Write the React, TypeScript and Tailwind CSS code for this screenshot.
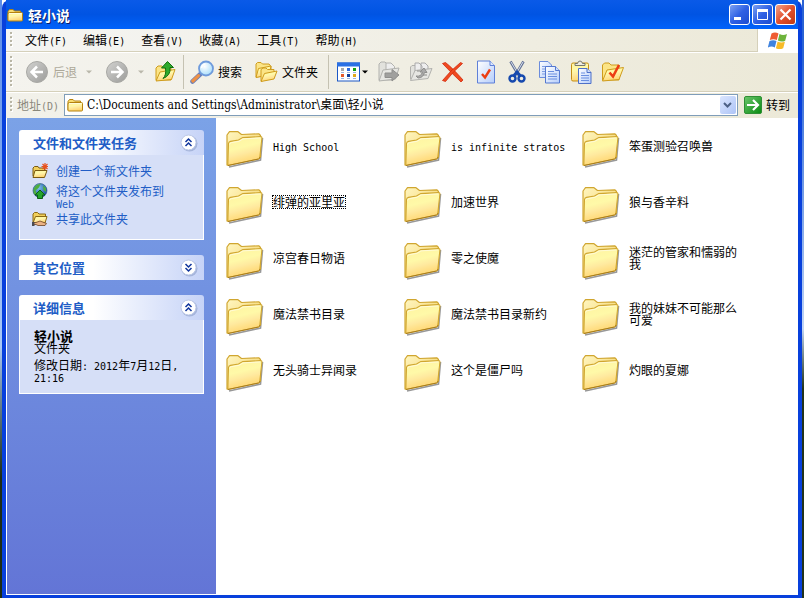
import { Fragment, type ReactNode } from "react";
import clsx from "clsx";

const menus = ["文件(F)", "编辑(E)", "查看(V)", "收藏(A)", "工具(T)", "帮助(H)"];

const folders = [
  "High School",
  "is infinite stratos",
  "笨蛋测验召唤兽",
  "绯弹的亚里亚",
  "加速世界",
  "狼与香辛料",
  "凉宫春日物语",
  "零之使魔",
  "迷茫的管家和懦弱的我",
  "魔法禁书目录",
  "魔法禁书目录新约",
  "我的妹妹不可能那么可爱",
  "无头骑士异闻录",
  "这个是僵尸吗",
  "灼眼的夏娜",
];

const focused = "绯弹的亚里亚";

/* Latin runs are set in a half-width mono face, as in the system font */
function Mixed({ text }: { text: string }) {
  return (
    <>
      {text.split(/([\x20-\x7e]+)/).map((part, idx) =>
        idx % 2 ? (
          <span key={idx} className="font-['DejaVu_Sans_Mono',monospace] text-[10px] leading-[0]">
            {part}
          </span>
        ) : (
          <Fragment key={idx}>{part}</Fragment>
        )
      )}
    </>
  );
}

function Svg({ size = 24, children }: { size?: number; children: ReactNode }) {
  return (
    <svg width={size} height={size} viewBox={`0 0 ${size} ${size}`} className="shrink-0" aria-hidden="true">
      {children}
    </svg>
  );
}

function Defs() {
  return (
    <svg width="0" height="0" className="absolute" aria-hidden="true">
      <defs>
        <linearGradient id="front" x1="0" y1="0" x2="0.3" y2="1">
          <stop offset="0" stopColor="#fff3a0" />
          <stop offset="0.45" stopColor="#fff9a8" />
          <stop offset="0.65" stopColor="#ffeaa0" />
          <stop offset="1" stopColor="#ffd670" />
        </linearGradient>
        <linearGradient id="back" x1="0" y1="0" x2="1" y2="1">
          <stop offset="0" stopColor="#fff6c0" />
          <stop offset="1" stopColor="#f2cd5e" />
        </linearGradient>
        <linearGradient id="gray" x1="0" y1="0" x2="1" y2="1">
          <stop offset="0" stopColor="#d2d2d0" />
          <stop offset="1" stopColor="#9c9c9a" />
        </linearGradient>
        <linearGradient id="paper" x1="0" y1="0" x2="1" y2="1">
          <stop offset="0" stopColor="#ffffff" />
          <stop offset="1" stopColor="#b5cdfb" />
        </linearGradient>
        <linearGradient id="green" x1="0" y1="0" x2="1" y2="1">
          <stop offset="0" stopColor="#6cc66c" />
          <stop offset="1" stopColor="#078a10" />
        </linearGradient>
        <radialGradient id="lens" cx="0.4" cy="0.35" r="0.7">
          <stop offset="0" stopColor="#ffffff" />
          <stop offset="1" stopColor="#a4dcfb" />
        </radialGradient>
        <radialGradient id="globe" cx="0.4" cy="0.3" r="0.8">
          <stop offset="0" stopColor="#7fc3ee" />
          <stop offset="1" stopColor="#0c3a8c" />
        </radialGradient>
        <filter id="soft" x="-20%" y="-20%" width="140%" height="140%">
          <feGaussianBlur stdDeviation="0.7" />
        </filter>
      </defs>
    </svg>
  );
}

function FolderIcon() {
  return (
    <Svg size={40}>
      <path d="M4 38 35.500 31 37.500 9" fill="none" stroke="#555" strokeWidth="1.600" opacity="0.600" filter="url(#soft)" />
      <path
        d="M2 36V6L4.500 2.700H13L16.500 5.500 34 4.800 35.500 6.500V28Z"
        fill="url(#back)"
        stroke="#d0a630"
        strokeWidth="1.200"
        strokeLinejoin="round"
      />
      <path
        d="M2.800 36.500 3.500 14.500Q3.600 12.800 5.500 12.400L13.500 11 17.500 8.600 35.500 7.600Q37 7.600 36.900 9L34.800 28.500Q34.600 29.700 33.500 30Z"
        fill="url(#front)"
        stroke="#d0a630"
        strokeWidth="1.100"
        strokeLinejoin="round"
      />
      <path d="M4.600 15.500Q4.700 14 6.200 13.700L14 12.300 18 9.900 35.300 8.900" fill="none" stroke="#fffbd8" strokeWidth="1" />
      <path d="M3 36.500 33.500 30Q34.800 29.600 35 28" fill="none" stroke="#a87c1c" strokeWidth="1" />
    </Svg>
  );
}

function SmallFolder() {
  return (
    <Svg size={16}>
      <path d="M1 13V4.500L2.500 2.500H6L7.500 4H13.500V6" fill="#f8dc70" stroke="#b5820f" strokeLinejoin="round" />
      <path d="M1 13.500V7Q1 5.500 2.500 5.500H14.500Q15.500 5.500 15.500 6.500V13Q15.500 14 14.500 14H2Q1 14 1 13.500Z" fill="url(#front)" stroke="#b5820f" />
      <path d="M2 6.500H14.500" stroke="#fffbd8" />
    </Svg>
  );
}

function RoundArrow({ back }: { back?: boolean }) {
  return (
    <Svg>
      <circle cx="12" cy="12" r="10.500" fill="url(#gray)" stroke="#a8a8a4" />
      <path
        d={back ? "M18 12H7.500M12 6.500 6.500 12 12 17.500" : "M6 12H16.500M12 6.500 17.500 12 12 17.500"}
        fill="none"
        stroke="#fff"
        strokeWidth="2.500"
      />
    </Svg>
  );
}

function UpIcon() {
  return (
    <Svg>
      <path d="M3 20V8L5 6H9L11 8H18V20Z" fill="#fbe486" stroke="#cf9c1c" strokeLinejoin="round" />
      <path d="M3 21 7 12 22 9.500 18.500 19.500Z" fill="url(#front)" stroke="#cf9c1c" strokeLinejoin="round" />
      <path d="M10 18.500Q13.500 15 12.500 8H8.500L14.500 1.500 20.500 7.500H17Q18 15.500 10 18.500Z" fill="#2faa2c" stroke="#11700f" strokeLinejoin="round" />
    </Svg>
  );
}

function SearchIcon() {
  return (
    <Svg>
      <path d="M2.500 21.500 10.500 14" stroke="#6b7fb8" strokeWidth="4.500" strokeLinecap="round" />
      <path d="M2.800 21 8.500 15.700" stroke="#ee9145" strokeWidth="3.200" strokeLinecap="round" />
      <circle cx="16" cy="8.500" r="7" fill="url(#lens)" stroke="#6f9bdc" strokeWidth="1.800" />
      <path d="M11.500 8Q12 4.500 15.500 4" fill="none" stroke="#fff" strokeWidth="1.500" />
    </Svg>
  );
}

function FoldersIcon() {
  return (
    <Svg>
      <path d="M2 17V4L3.500 2.500H7L8.500 4H15L17 6.500V15Z" fill="#fbe486" stroke="#cf9c1c" strokeLinejoin="round" />
      <path d="M2 17.500 4.500 8.500 17 6 15 15Z" fill="url(#front)" stroke="#cf9c1c" strokeLinejoin="round" />
      <path d="M7 21V9.500L9 8H12L13.500 9.500H20V18Z" fill="#fbe486" stroke="#cf9c1c" strokeLinejoin="round" />
      <path d="M7 21.500 10.500 13.500 23 11 20 19Z" fill="url(#front)" stroke="#cf9c1c" strokeLinejoin="round" />
    </Svg>
  );
}

function ViewsIcon() {
  const colors = ["#a8a8a8", "#2c6be0", "#12a012", "#e45a2a", "#12409c", "#e0a818"];
  return (
    <Svg>
      <rect x="0.500" y="3" width="22" height="18" fill="#fff" stroke="#1b57c6" />
      <rect x="0" y="2.500" width="23" height="4" fill="#2a70e4" />
      {colors.map((fill, idx) => (
        <g key={idx}>
          <rect x={4 + (idx % 3) * 6} y={idx < 3 ? 8 : 14} width="3" height="3" fill={fill} />
          <path d={`M${4 + (idx % 3) * 6} ${idx < 3 ? 12.5 : 18.5}h3`} stroke="#9db4dc" />
        </g>
      ))}
    </Svg>
  );
}

function GrayFolder({ arrow }: { arrow?: boolean }) {
  return (
    <Svg>
      {arrow ? (
        <>
          <path d="M2 20V4L4 2H8L10 4H15V20Z" fill="#e2e2dd" stroke="#b2b2ae" />
          <path d="M9 3H14L17.500 6.500V15H9Z" fill="#eee" stroke="#b2b2ae" />
          <path d="M2 21 6 10 22 8 18.500 19Z" fill="#e6e6e2" stroke="#b2b2ae" strokeLinejoin="round" />
          <path d="M8 13H15V9.500L22 15 15 21V17.500H8Z" fill="#a0a09e" stroke="#8e8e8c" strokeLinejoin="round" />
        </>
      ) : (
        <>
          <path d="M1.500 19V7L3 5.500H7V19Z" fill="#e2e2dd" stroke="#b2b2ae" />
          <path d="M6 3H10L13 6V14H6ZM12 3H16L19 6V14H12Z" fill="#eee" stroke="#aaa" />
          <path d="M1.500 20.500 6 10.500 23 8.500 19 18.500Z" fill="#e6e6e2" stroke="#b2b2ae" strokeLinejoin="round" />
          <path d="M7 16Q12 17 13.500 12H11L15 8 18 12.500H15.500Q14 18 9 18ZM8 11H12M14 15H18" fill="#aaa" stroke="#8e8e8c" />
        </>
      )}
    </Svg>
  );
}

function DeleteIcon() {
  return (
    <Svg>
      <path d="M1.500 3.500 4.500 2.500Q11.500 8 22 20L20 22Q10.500 13 1.500 3.500Z" fill="#f04a20" stroke="#d2280c" strokeWidth="0.800" />
      <path d="M19.500 2.500 21.500 3.500Q12.500 11 4.500 21.500L1.500 20.500Q9.500 10.500 19.500 2.500Z" fill="#f04a20" stroke="#d2280c" strokeWidth="0.800" />
    </Svg>
  );
}

function CheckDoc() {
  return (
    <Svg>
      <path d="M4.500 1H17L21.500 5.500V23H4.500Z" fill="url(#paper)" stroke="#5f80d8" />
      <path d="M17 1V5.500H21.500" fill="#dbe7fd" stroke="#5f80d8" />
      <path d="M9 14 12 17.500 17 9.500" fill="none" stroke="#ec3e14" strokeWidth="2.400" />
    </Svg>
  );
}

function CutIcon() {
  return (
    <Svg>
      <path d="M5.500 1.500 13.500 15M18.500 1.500 10.500 15" stroke="#5f6f94" strokeWidth="2.600" />
      <path d="M6 2 12.500 13M18 2 11.500 13" stroke="#d9dfec" strokeWidth="1" />
      <circle cx="7.500" cy="18.500" r="3" fill="none" stroke="#1649ae" strokeWidth="2.400" />
      <circle cx="16.500" cy="18.500" r="3" fill="none" stroke="#1649ae" strokeWidth="2.400" />
      <path d="M9 15.500 12 12 15 15.500" fill="none" stroke="#1649ae" strokeWidth="3" />
    </Svg>
  );
}

function CopyIcon() {
  return (
    <Svg>
      <path d="M2.500 1.500H11L14.500 5V17.500H2.500Z" fill="url(#paper)" stroke="#6b8cdc" />
      <path d="M5 6.500H10M5 9H12M5 11.500H12M5 14H12" stroke="#7e9ee2" />
      <path d="M8.500 6.500H18.500L22.500 10.500V23H8.500Z" fill="url(#paper)" stroke="#5579d0" />
      <path d="M18.500 6.500V10.500H22.500" fill="#cfdffc" stroke="#5579d0" />
      <path d="M11 11.500H17M11 14H20M11 16.500H20M11 19H20" stroke="#6a8fe0" />
    </Svg>
  );
}

function PasteIcon() {
  return (
    <Svg>
      <rect x="2.500" y="3" width="17" height="18" rx="1.500" fill="url(#front)" stroke="#c48e16" />
      <path d="M6 5.500V3.500H8.500Q9 1 11 1T13.500 3.500H16V5.500Z" fill="#eceae0" stroke="#77776c" />
      <path d="M9.500 8.500H18L22 12.500V23.500H9.500Z" fill="url(#paper)" stroke="#4e70c8" />
      <path d="M18 8.500V12.500H22" fill="#cfdffc" stroke="#4e70c8" />
      <path d="M12 13H16M12 15.500H20M12 18H20M12 20.500H20" stroke="#6a8fe0" />
    </Svg>
  );
}

function FolderCheck() {
  return (
    <Svg>
      <path d="M1.500 20V5L3.500 3H8L10 5H18V20Z" fill="#fbe486" stroke="#cf9c1c" strokeLinejoin="round" />
      <path d="M1.500 21 6 10 22.500 7.500 18 19.500Z" fill="url(#front)" stroke="#cf9c1c" strokeLinejoin="round" />
      <path d="M8.500 12.500 12 16.500 18 5" fill="none" stroke="#ec3e14" strokeWidth="2.600" />
    </Svg>
  );
}

function WindowsLogo() {
  return (
    <Svg size={20}>
      <path d="M3.500 2.500Q7 .5 10.500 2.500L8.800 9Q5.500 7.300 1.800 9Z" fill="#ef5b32" />
      <path d="M11.500 3Q15 5 19 3L17.200 9.700Q13.500 11.500 9.900 9.500Z" fill="#6db33b" />
      <path d="M1.500 10Q5.200 8.300 8.500 10L6.800 16.500Q3.500 14.700-.2 16.500Z" fill="#3f83df" />
      <path d="M9.600 10.600Q13.200 12.400 16.900 10.700L15.200 17.200Q11.500 19 7.900 17.200Z" fill="#f8bb27" />
    </Svg>
  );
}

function NewFolderIcon() {
  return (
    <Svg size={16}>
      <path d="M1 13V5L2.500 3.500H6L7 5H12.500V13Z" fill="#f1cf5a" stroke="#7a5a12" />
      <path d="M1 14.500 3 7.500H15L12.500 14.500Z" fill="url(#front)" stroke="#7a5a12" strokeLinejoin="round" />
      <path d="M13 0V7M9.500 3.500H16M10.500 1 15.500 6M15.500 1 10.500 6" stroke="#e8501c" strokeWidth="1.200" />
    </Svg>
  );
}

function PublishIcon() {
  return (
    <Svg size={16}>
      <circle cx="8" cy="7.500" r="7" fill="url(#globe)" stroke="#23527c" strokeWidth="0.600" />
      <path d="M3 3.500Q5 .8 8.500 1L7 4.500 3.500 7.500 5 11 2.500 11.500Q.2 7.500 3 3.500ZM11 2.500 14 5V9L11.500 7Z" fill="#4fae3e" />
      <path d="M8 7 13 12H10.500V15.500H5.500V12H3Z" fill="#25a42b" stroke="#0c5f14" strokeLinejoin="round" />
    </Svg>
  );
}

function ShareIcon() {
  return (
    <Svg size={16}>
      <path d="M1 11V3L2.500 1.500H5.500L7 3H13.500V5" fill="#f1cf5a" stroke="#8a6812" />
      <path d="M1 12 3.500 5.500H15L13 12Z" fill="url(#front)" stroke="#8a6812" strokeLinejoin="round" />
      <path d="M0 11.500H4L8 10 14.500 12.500 13 14.500H6L4 13.500H0Z" fill="#eab183" stroke="#6b4322" strokeWidth="0.800" />
      <path d="M0 11V15H2.500V11Z" fill="#4a4a52" />
    </Svg>
  );
}

function Caret({ dim }: { dim?: boolean }) {
  return (
    <svg width="8" height="4" viewBox="0 0 8 4" className={clsx("shrink-0", dim ? "text-[#b9b7aa]" : "text-black")} aria-hidden="true">
      <path d="M1 0.500H7L4 3.500Z" fill="currentColor" />
    </svg>
  );
}

function Grip() {
  return (
    <svg width="3" height="100%" className="shrink-0 self-stretch" aria-hidden="true">
      <defs>
        <pattern id="dots" width="3" height="4" patternUnits="userSpaceOnUse">
          <rect x="1" y="1" width="2" height="2" fill="#fff" />
          <rect width="2" height="2" fill="#b9b6a6" />
        </pattern>
      </defs>
      <rect width="3" height="100%" fill="url(#dots)" />
    </svg>
  );
}

function Separator() {
  return <span className="h-[34px] w-px shrink-0 bg-[#c5c2b2]" />;
}

function TitleButton({ label, close, children }: { label: string; close?: boolean; children: ReactNode }) {
  return (
    <button
      type="button"
      aria-label={label}
      className={clsx(
        "size-[21px] rounded-[3px] border border-white",
        close
          ? "bg-linear-to-br from-[#f0a188] via-[#e2502d] to-[#c03a12]"
          : "bg-linear-to-br from-[#7c9ff2] via-[#2f60e4] to-[#1c4cd0]"
      )}
    >
      <svg width="19" height="19" viewBox="0 0 19 19" aria-hidden="true">
        {children}
      </svg>
    </button>
  );
}

function Panel({ title, children }: { title: string; children?: ReactNode }) {
  return (
    <section>
      <h2 className="rounded-t-[3px] bg-linear-to-r from-white from-40% to-[#c6d3f7]">
        <button
          type="button"
          className="flex h-[25px] w-full items-center justify-between pr-1.5 pl-3.5 text-[13px] font-bold text-[#215dc6]"
        >
          {title}
          <svg width="18" height="18" viewBox="0 0 18 18" aria-hidden="true">
            <circle cx="9.500" cy="9.500" r="8" fill="#8a9cc8" opacity="0.600" />
            <circle cx="8.500" cy="8.500" r="7.500" fill="#fff" stroke="#bcc8e6" />
            <path
              d={children ? "M5.500 8 8.500 5 11.500 8M5.500 12 8.500 9 11.500 12" : "M5.500 5 8.500 8 11.500 5M5.500 9 8.500 12 11.500 9"}
              fill="none"
              stroke="#10359c"
              strokeWidth="1.500"
            />
          </svg>
        </button>
      </h2>
      {children && <div className="border border-t-0 border-white bg-[#d6dff7] px-3">{children}</div>}
    </section>
  );
}

function Task({ icon, text }: { icon: ReactNode; text: string }) {
  return (
    <li className="first:mb-1">
      <a href="#" className="flex items-start gap-2 pr-6 text-[#215dc6]">
        {icon}
        <span className="py-0.5">
          <Mixed text={text} />
        </span>
      </a>
    </li>
  );
}

export default function App() {
  return (
    <div className="flex h-screen bg-white font-['Noto_Sans_CJK_SC',sans-serif] text-xs leading-3 text-black">
      <Defs />

      {/* Desktop edge */}
      <div className="w-0.5 bg-linear-to-b from-[#5b8be8] from-0% via-[#a9c8f6] via-58% to-[#1d2c14] to-80%" />

      <div className="flex min-w-0 flex-1 flex-col rounded-t-lg border-x-4 border-b-[3px] border-[#0840dc] bg-[#0840dc]">
        {/* Title bar */}
        <header className="flex h-[29px] shrink-0 items-center gap-[5px] bg-linear-to-b from-[#0a5ae8] via-[#0054e3] via-50% to-[#0062fb] pr-0.5 pl-px">
          <SmallFolder />
          <h1 className="flex-1 text-sm font-bold text-white [text-shadow:1px_1px_#0a1f6c]">轻小说</h1>
          <div className="flex gap-0.5">
            <TitleButton label="最小化">
              <rect x="4" y="12" width="7" height="3" fill="#fff" />
            </TitleButton>
            <TitleButton label="最大化">
              <path d="M4.500 5V14.500H14.500V5" fill="none" stroke="#fff" />
              <rect x="4" y="4" width="11" height="3" fill="#fff" />
            </TitleButton>
            <TitleButton label="关闭" close>
              <path d="M4.500 4.500 14.500 14.500M14.500 4.500 4.500 14.500" stroke="#fff" strokeWidth="2.200" />
            </TitleButton>
          </div>
        </header>

        {/* Menu bar */}
        <div className="flex h-6 shrink-0 border-b border-white bg-linear-to-r from-[#f5f5f3] to-[#ece9d8]">
          <nav className="flex flex-1 items-center gap-4 border-r border-b border-[#d5d0ba] pl-1">
            <div className="flex h-4">
              <Grip />
            </div>
            {menus.map((menu, idx) => (
              <button key={menu} type="button" className={clsx("whitespace-nowrap", idx === 0 && "-ml-1")}>
                <Mixed text={menu} />
              </button>
            ))}
          </nav>
          <div className="flex w-10 items-center justify-center bg-white">
            <WindowsLogo />
          </div>
        </div>

        {/* Toolbar */}
        <div className="flex h-[39px] shrink-0 items-center border-b border-[#d5d0ba] bg-linear-to-r from-[#f4f3ee] to-[#ece9d8] pl-1">
          <div className="flex h-8">
            <Grip />
          </div>
          <button type="button" className="ml-3 flex items-center gap-1 text-[#aca899]">
            <RoundArrow back />
            后退
          </button>
          <button type="button" aria-label="后退列表" className="ml-2">
            <Caret dim />
          </button>
          <button type="button" aria-label="前进" className="ml-3">
            <RoundArrow />
          </button>
          <button type="button" aria-label="前进列表" className="ml-2">
            <Caret dim />
          </button>
          <button type="button" aria-label="向上" className="mr-1.5 ml-2">
            <UpIcon />
          </button>
          <Separator />
          <button type="button" className="ml-1.5 flex items-center gap-1">
            <SearchIcon />
            搜索
          </button>
          <button type="button" className="mr-2.5 ml-3 flex items-center gap-1">
            <FoldersIcon />
            文件夹
          </button>
          <Separator />
          <button type="button" aria-label="查看" className="ml-2 flex items-center">
            <ViewsIcon />
            <Caret />
          </button>
          <div className="ml-2 flex gap-2">
            {[
              ["移至", <GrayFolder arrow />],
              ["复制到", <GrayFolder />],
              ["删除", <DeleteIcon />],
              ["属性", <CheckDoc />],
              ["剪切", <CutIcon />],
              ["复制", <CopyIcon />],
              ["粘贴", <PasteIcon />],
              ["文件夹选项", <FolderCheck />],
            ].map(([label, icon]) => (
              <button key={label as string} type="button" aria-label={label as string}>
                {icon}
              </button>
            ))}
          </div>
        </div>

        {/* Address bar */}
        <div className="flex h-[26px] shrink-0 items-center border-t border-white bg-linear-to-r from-[#f2f1ea] to-[#ece9d8] pb-0.5 pl-1">
          <div className="flex h-4">
            <Grip />
          </div>
          <label htmlFor="address" className="ml-1 w-[47px] text-[#8a887c]">
            <Mixed text="地址(D)" />
          </label>
          <div className="flex h-[22px] flex-1 items-center gap-1 border border-[#7f9db9] bg-white pr-px pl-0.5">
            <SmallFolder />
            <input
              id="address"
              className="min-w-0 flex-1 font-['DejaVu_Serif_Condensed','DejaVu_Serif','Noto_Sans_CJK_SC',serif] text-xs outline-none"
              defaultValue="C:\Documents and Settings\Administrator\桌面\轻小说"
            />
            <button
              type="button"
              aria-label="地址列表"
              className="flex h-[18px] w-4 items-center justify-center rounded-xs bg-linear-to-br from-[#dbe6fe] to-[#aec4f6]"
            >
              <svg width="9" height="6" viewBox="0 0 9 6" aria-hidden="true">
                <path d="M1 1 4.500 4.500 8 1" fill="none" stroke="#4d6185" strokeWidth="2" />
              </svg>
            </button>
          </div>
          <button type="button" className="mr-2 ml-1.5 flex items-center gap-1">
            <Svg size={18}>
              <rect x="0.500" y="0.500" width="17" height="17" rx="1.500" fill="url(#green)" stroke="#2f8f35" />
              <path d="M3 9H13.500M9 4 14 9 9 14" fill="none" stroke="#fff" strokeWidth="2.200" />
            </Svg>
            转到
          </button>
        </div>

        <div className="flex min-h-0 flex-1 border-b border-l border-white bg-white">
          {/* Task pane */}
          <aside className="flex w-[209px] shrink-0 flex-col gap-[15px] bg-linear-to-b from-[#7ba2e7] to-[#6375d6] p-3">
            <Panel title="文件和文件夹任务">
              <ul className="pt-2 pb-3">
                <Task icon={<NewFolderIcon />} text="创建一个新文件夹" />
                <Task icon={<PublishIcon />} text="将这个文件夹发布到 Web" />
                <Task icon={<ShareIcon />} text="共享此文件夹" />
              </ul>
            </Panel>
            <Panel title="其它位置" />
            <Panel title="详细信息">
              <div className="px-0.5 py-2.5">
                <p className="text-[13px] leading-3 font-bold">轻小说</p>
                <p>文件夹</p>
                <p className="mt-[5px]">
                  <Mixed text="修改日期: 2012年7月12日, 21:16" />
                </p>
              </div>
            </Panel>
          </aside>

          {/* Folder tiles */}
          <main className="min-w-0 flex-1 overflow-hidden pt-[3px] pl-[9px]">
            <ul className="grid grid-cols-[repeat(auto-fill,178px)]">
              {folders.map((name) => (
                <li key={name} className="flex h-14 items-center gap-2">
                  <FolderIcon />
                  <span className="w-[116px] pb-1.5">
                    <span
                      className={clsx(
                        "inline-block",
                        name === focused && "outline-1 outline-dotted outline-black"
                      )}
                    >
                      <Mixed text={name} />
                    </span>
                  </span>
                </li>
              ))}
            </ul>
          </main>
        </div>
      </div>

      {/* Desktop edge */}
      <div className="w-0.5 bg-linear-to-b from-[#2a62d4] from-10% via-[#c3d6f5] via-55% to-[#22331a] to-65%" />
    </div>
  );
}
